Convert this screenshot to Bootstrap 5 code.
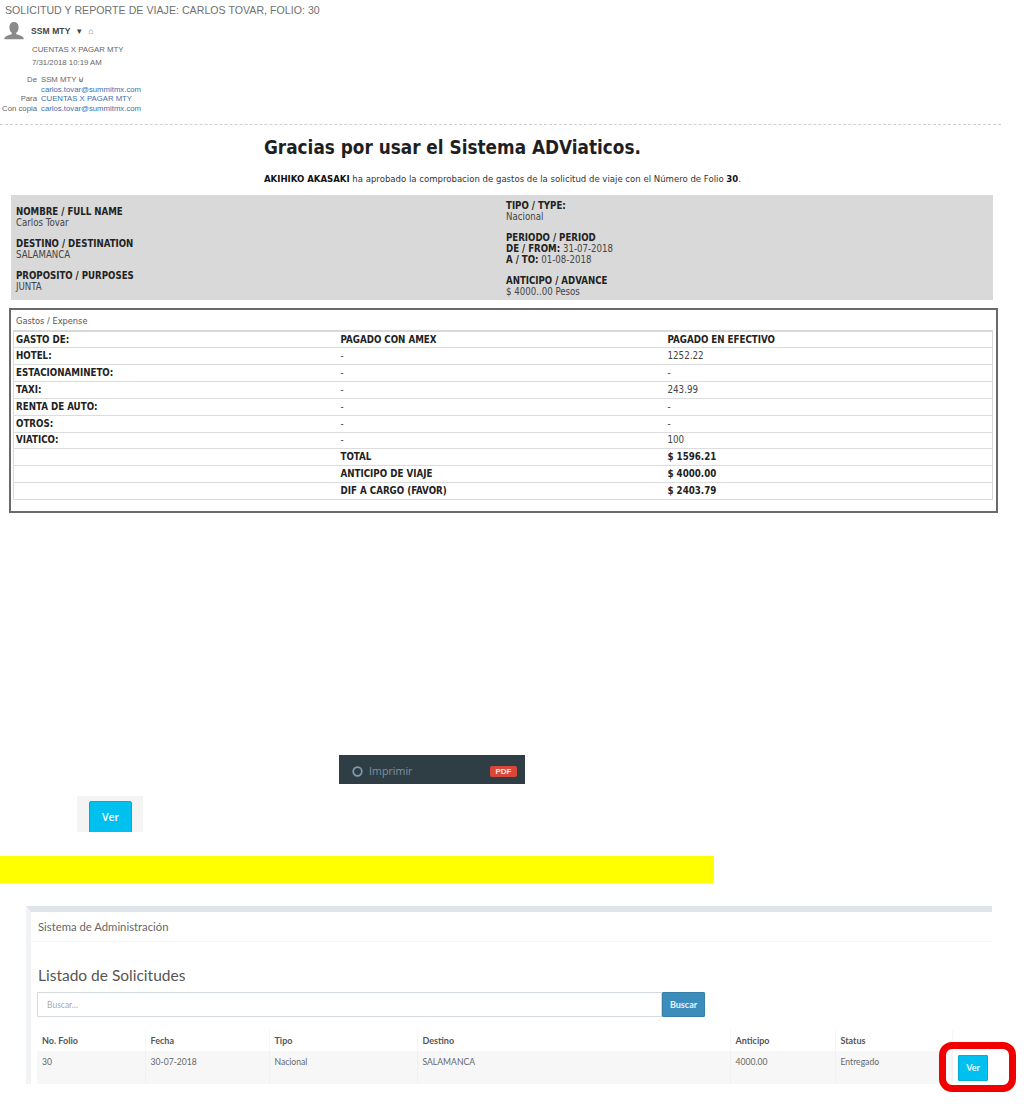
<!DOCTYPE html>
<html lang="es">
<head>
<meta charset="utf-8">
<title>Solicitud y reporte de viaje</title>
<link rel="stylesheet" href="https://cdn.jsdelivr.net/npm/bootstrap@5.3.0/dist/css/bootstrap.min.css">
<style>
html,body{margin:0;background:#fff}
body{width:1027px;height:1104px;overflow:hidden;position:relative;font-family:"Liberation Sans",Arial,sans-serif;color:#333}
.mail-wrap{height:125px;padding:4px 0 0 5px;border-bottom:1px dashed #cfcfcf;margin:0 26px 0 0;color:#666}
.mail-subject{font-size:10.6px;line-height:12px;color:#707070;letter-spacing:.03px}
.mail-head{padding-top:6px;height:29px}
.mail-sender{font-size:8.5px;font-weight:700;color:#444;line-height:12px;letter-spacing:.1px;padding-top:3px}
.mail-avatar{width:20px;height:20px;margin-right:7px;margin-left:-1px;flex:none}
.mail-line{font-size:7.8px;line-height:10px;color:#666}
.mail-stack{padding-left:27px}
.mail-stack .mail-line{margin-bottom:3px}
.mail-meta{font-size:7.75px;line-height:9.500px;margin:7px 0 0 -32px;color:#666;display:grid;grid-template-columns:37px auto;column-gap:4px;justify-items:start}
.mail-meta dt{font-weight:400;justify-self:end;margin:0;white-space:nowrap}
.mail-meta dd{margin:0;color:#3f6fb0}
.mail-meta .plain{color:#666}
.tah{font-family:"DejaVu Sans Condensed","DejaVu Sans",Tahoma,sans-serif}
.thanks{padding:11px 0 0 264px;height:70px}
.thanks h1{font-size:18.8px;font-weight:700;color:#1f1f1f;margin:0;line-height:24px}
.thanks p{font-size:9.5px;line-height:12px;margin:13px 0 0;color:#333}
.thanks b{color:#111}
.info-box{margin-left:11px;width:982px;height:105px;background:#d9d9d9;display:flex;font-size:9.6px;line-height:11px;color:#444}
.info-col{width:495px;padding:0 0 0 5px}
.info-col+.info-col{width:487px;padding-left:0}
.info-col b{color:#222}
.info-l{padding-top:10.5px}
.info-r{padding-top:4.5px}
.info-col div{margin-bottom:10px}
.exp-panel{margin:8px 0 0 9px;width:989px;height:205px;border:2px solid #6a6a6a;padding:1px 3px 0 2px}
.exp-title{font-size:9.200px;line-height:19px;padding-left:3px;color:#555;height:19px}
.exp-table{width:980px;margin:0;table-layout:fixed;font-size:9.700px;color:#444;border:1px solid #d8d8d8;border-top-width:2px}
.exp-table td{height:16.85px;padding:0 0 1px 2px;border:0;border-bottom:1.500px solid #dcdcdc;line-height:13px;vertical-align:middle;background:transparent;color:#444}
.exp-table b{color:#222}
.exp-table .c1{width:325px}
.exp-table .c2{width:327px}
.print-bar{margin:242px 0 0 339px;width:186px;height:29px;background:#2f3d45;display:flex;align-items:center;padding:3px 8px 0 13px;font-family:"Open Sans",sans-serif;font-size:10.700px;color:#7f93a0}
.print-bar svg{margin-right:6px}
.pdf-tag{background:#d9473a;color:#f6e9e8;font-size:8px;font-weight:700;padding:0 5.500px;border-radius:2px;line-height:11px;margin-left:auto;font-family:"Liberation Sans",sans-serif}
.ver-shot{margin:12px 0 0 77px;width:66px;height:36px;background:#f4f4f4;padding:5px 0 0 12px;overflow:hidden}
.ver-btn{display:block;width:43px;height:34px;padding:0;background:#00c0ef;border:1px solid #00acd6;border-radius:2px;color:#fff;font-family:"Open Sans",sans-serif;font-size:10.500px;font-weight:600;line-height:30px;text-align:center}
.yellow-bar{margin-top:24px;width:714px;height:27px;background:#ffff00}
.admin-shot{position:relative;margin:23px 0 0 26px;width:966px;height:178px;border-top:6px solid #dfe5ea;border-left:5px solid #f1f3f5;background:#fff;font-family:Lato,"Open Sans",sans-serif;color:#555}
.admin-top{height:30px;line-height:29px;padding-left:7px;font-size:11.300px;color:#666;border-bottom:1px solid #f5f5f5}
.admin-h{font-size:15.500px;font-weight:400;margin:21px 0 0 7px;line-height:24px;color:#555}
.admin-search{display:flex;margin:5px 0 0 6px;width:668px;height:25px}
.admin-input{flex:1;height:25px;font-size:8.500px;padding:0 9px;border:1px solid #d5dade;border-radius:0;color:#999;font-family:Lato,sans-serif;min-height:0}
.admin-input::placeholder{color:#aaa}
.admin-go{width:43px;height:25px;padding:0;background:#3c8dbc;border:1px solid #367fa9;border-radius:1px;color:#e8f2f8;font-size:9px;font-weight:700;line-height:22px;font-family:Lato,sans-serif}
.admin-table{margin:13px 0 0 6px;width:916px;table-layout:fixed;font-size:9px;color:#666}
.admin-table th{height:21px;padding:0 0 0 5px;font-weight:700;color:#555;background:#fff;border:0;border-right:1px solid #f6f6f6;vertical-align:middle}
.admin-table td{height:33px;padding:5px 0 0 5px;font-size:8.600px;background:#f7f7f7;color:#666;border:0;border-right:1px solid #f1f1f1;vertical-align:top}
.admin-ver{position:absolute;left:927px;top:143px;width:30px;height:26px;padding:0;background:#00c0ef;border:1px solid #00acd6;border-radius:1px;color:#e9fbff;font-size:9px;font-weight:700;line-height:22px;font-family:Lato,sans-serif}
.red-frame{position:absolute;left:908px;top:130px;width:77px;height:50px;border:7px solid #f00000;border-radius:13px}
</style>
</head>
<body>
<section class="mail-wrap">
  <div class="mail-subject">SOLICITUD Y REPORTE DE VIAJE: CARLOS TOVAR, FOLIO: 30</div>
  <div class="d-flex align-items-start mail-head">
    <svg class="mail-avatar" viewBox="0 0 20 20" aria-hidden="true"><path fill="#8a8a8a" d="M10 0c3 0 4.600 2.200 4.600 5.400 0 2.400-1 4.400-2.400 5.400v1.400c2.600.7 6 1.600 7.400 3.600v1.400H.4v-1.400c1.400-2 4.800-2.900 7.400-3.600v-1.400C6.400 9.800 5.400 7.800 5.400 5.400 5.400 2.200 7 0 10 0z"/></svg>
    <div class="mail-sender">SSM MTY <span class="fw-normal ms-1">▾</span> <span class="fw-normal text-secondary ms-1">⌂</span></div>
  </div>
  <div class="mail-stack">
    <div class="mail-line">CUENTAS X PAGAR MTY</div>
    <div class="mail-line">7/31/2018 10:19 AM</div>
    <dl class="mail-meta">
      <dt>De</dt><dd class="plain">SSM MTY ⊌</dd>
      <dt></dt><dd>carlos.tovar@summitmx.com</dd>
      <dt>Para</dt><dd>CUENTAS X PAGAR MTY</dd>
      <dt>Con copia</dt><dd>carlos.tovar@summitmx.com</dd>
    </dl>
  </div>
</section>

<section class="thanks tah">
  <h1>Gracias por usar el Sistema ADViaticos.</h1>
  <p><b>AKIHIKO AKASAKI</b> ha aprobado la comprobacion de gastos de la solicitud de viaje con el Número de Folio <b>30</b>.</p>
</section>

<section class="info-box tah">
  <div class="info-col info-l">
    <div><b>NOMBRE / FULL NAME</b><br>Carlos Tovar</div>
    <div><b>DESTINO / DESTINATION</b><br>SALAMANCA</div>
    <div><b>PROPOSITO / PURPOSES</b><br>JUNTA</div>
  </div>
  <div class="info-col info-r">
    <div><b>TIPO / TYPE:</b><br>Nacional</div>
    <div><b>PERIODO / PERIOD</b><br><b>DE / FROM:</b> 31-07-2018<br><b>A / TO:</b> 01-08-2018</div>
    <div><b>ANTICIPO / ADVANCE</b><br>$ 4000..00 Pesos</div>
  </div>
</section>

<section class="exp-panel tah">
  <div class="exp-title">Gastos / Expense</div>
  <table class="table exp-table">
    <colgroup><col class="c1"><col class="c2"><col></colgroup>
    <tbody>
      <tr><td><b>GASTO DE:</b></td><td><b>PAGADO CON AMEX</b></td><td><b>PAGADO EN EFECTIVO</b></td></tr>
      <tr><td><b>HOTEL:</b></td><td>-</td><td>1252.22</td></tr>
      <tr><td><b>ESTACIONAMINETO:</b></td><td>-</td><td>-</td></tr>
      <tr><td><b>TAXI:</b></td><td>-</td><td>243.99</td></tr>
      <tr><td><b>RENTA DE AUTO:</b></td><td>-</td><td>-</td></tr>
      <tr><td><b>OTROS:</b></td><td>-</td><td>-</td></tr>
      <tr><td><b>VIATICO:</b></td><td>-</td><td>100</td></tr>
      <tr><td></td><td><b>TOTAL</b></td><td><b>$ 1596.21</b></td></tr>
      <tr><td></td><td><b>ANTICIPO DE VIAJE</b></td><td><b>$ 4000.00</b></td></tr>
      <tr><td></td><td><b>DIF A CARGO (FAVOR)</b></td><td><b>$ 2403.79</b></td></tr>
    </tbody>
  </table>
</section>

<div class="print-bar">
  <svg width="11" height="11" viewBox="0 0 11 11" aria-hidden="true"><circle cx="5.500" cy="5.500" r="4.300" fill="none" stroke="#7f9cb0" stroke-width="1.700"/></svg>
  <span>Imprimir</span>
  <span class="pdf-tag">PDF</span>
</div>

<div class="ver-shot"><span class="ver-btn">Ver</span></div>

<div class="yellow-bar"></div>

<section class="admin-shot">
  <div class="admin-top">Sistema de Administración</div>
  <h2 class="admin-h">Listado de Solicitudes</h2>
  <div class="admin-search">
    <input class="form-control admin-input" type="text" placeholder="Buscar...">
    <button class="btn admin-go" type="button">Buscar</button>
  </div>
  <table class="table admin-table">
    <colgroup><col style="width:108px"><col style="width:124px"><col style="width:148px"><col style="width:313px"><col style="width:105px"><col></colgroup>
    <thead><tr><th>No. Folio</th><th>Fecha</th><th>Tipo</th><th>Destino</th><th>Anticipo</th><th>Status</th></tr></thead>
    <tbody><tr><td>30</td><td>30-07-2018</td><td>Nacional</td><td>SALAMANCA</td><td>4000.00</td><td>Entregado</td></tr></tbody>
  </table>
  <button class="btn admin-ver" type="button">Ver</button>
  <div class="red-frame"></div>
</section>
<script src="https://cdn.jsdelivr.net/npm/bootstrap@5.3.0/dist/js/bootstrap.bundle.min.js"></script>
</body>
</html>
